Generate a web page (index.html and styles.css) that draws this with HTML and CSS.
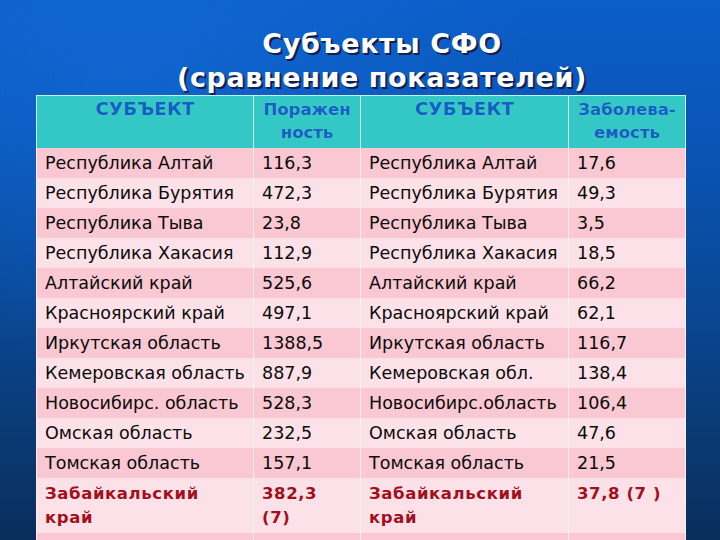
FILE: index.html
```html
<!DOCTYPE html>
<html lang="ru">
<head>
<meta charset="utf-8">
<link rel="stylesheet" href="styles.css">
</head>
<body>
<div class="slide">
  <h1 class="title">Субъекты СФО<br>(сравнение показателей)</h1>
  <table class="grid">
    <colgroup>
      <col class="c1"><col class="c2"><col class="c3"><col class="c4">
    </colgroup>
    <thead>
      <tr>
        <th class="hbig">СУБЪЕКТ</th>
        <th class="hsmall">Поражен<br>ность</th>
        <th class="hbig">СУБЪЕКТ</th>
        <th class="hsmall">Заболева-<br>емость</th>
      </tr>
    </thead>
    <tbody>
      <tr class="dk"><td>Республика Алтай</td><td>116,3</td><td>Республика Алтай</td><td>17,6</td></tr>
      <tr class="lt"><td>Республика Бурятия</td><td>472,3</td><td>Республика Бурятия</td><td>49,3</td></tr>
      <tr class="dk"><td>Республика Тыва</td><td>23,8</td><td>Республика Тыва</td><td>3,5</td></tr>
      <tr class="lt"><td>Республика Хакасия</td><td>112,9</td><td>Республика Хакасия</td><td>18,5</td></tr>
      <tr class="dk"><td>Алтайский край</td><td>525,6</td><td>Алтайский край</td><td>66,2</td></tr>
      <tr class="lt"><td>Красноярский край</td><td>497,1</td><td>Красноярский край</td><td>62,1</td></tr>
      <tr class="dk"><td>Иркутская область</td><td>1388,5</td><td>Иркутская область</td><td>116,7</td></tr>
      <tr class="lt"><td>Кемеровская область</td><td>887,9</td><td>Кемеровская обл.</td><td>138,4</td></tr>
      <tr class="dk"><td>Новосибирс. область</td><td>528,3</td><td>Новосибирс.область</td><td>106,4</td></tr>
      <tr class="lt"><td>Омская область</td><td>232,5</td><td>Омская область</td><td>47,6</td></tr>
      <tr class="dk"><td>Томская область</td><td>157,1</td><td>Томская область</td><td>21,5</td></tr>
      <tr class="lt hl"><td>Забайкальский<br>край</td><td>382,3<br>(7)</td><td>Забайкальский<br>край</td><td>37,8 (7 )</td></tr>
      <tr class="dk"><td>СФО</td><td>529,4</td><td>СФО</td><td>70,4</td></tr>
    </tbody>
  </table>
</div>
</body>
</html>
```
FILE: styles.css
```css
html, body {
  margin: 0;
  padding: 0;
}
body {
  width: 720px;
  height: 540px;
  overflow: hidden;
  background:
    radial-gradient(ellipse 420px 300px at 120px 60px, rgba(20,110,220,0.55), rgba(20,110,220,0) 100%),
    linear-gradient(180deg, #0b5ec8 0%, #0a55b8 25%, #0a4896 55%, #0a3a74 80%, #0a2e5c 100%);
  font-family: "DejaVu Sans", Verdana, sans-serif;
}
.slide {
  display: flex;
  flex-direction: column;
  align-items: flex-start;
  padding-top: 27px;
}
.title {
  margin: 0;
  align-self: stretch;
  padding-left: 44px;
  text-align: center;
  font-family: "DejaVu Sans", Verdana, sans-serif;
  font-weight: bold;
  font-size: 27px;
  line-height: 34px;
  letter-spacing: 0.6px;
  color: #ffffff;
  text-shadow: 2px 2px 0 #14204a, 1px 1px 1px #14204a;
}
.grid {
  margin-left: 36px;
  border-collapse: collapse;
  table-layout: fixed;
  width: 649px;
  color: #0b0b0b;
  font-size: 17.5px;
}
.c1 { width: 217px; }
.c2 { width: 107px; }
.c3 { width: 208px; }
.c4 { width: 117px; }
.grid th {
  background: #33c8c6;
  box-sizing: border-box;
  height: 52px;
  padding: 0;
  vertical-align: top;
  text-align: center;
  color: #1360c2;
  font-weight: bold;
  border: 1px solid #c8f0ee;
  border-bottom: none;
  text-shadow: 0 0 1px rgba(255,255,255,0.35);
}
.grid th.hbig {
  font-size: 18px;
  line-height: 20px;
  padding-top: 3px;
  letter-spacing: 0.3px;
}
.grid th.hsmall {
  font-size: 16.5px;
  line-height: 23px;
  padding-top: 2px;
}
.grid td {
  box-sizing: border-box;
  height: 30px;
  padding: 0 0 0 8px;
  white-space: nowrap;
  vertical-align: middle;
  line-height: 22px;
  border-right: 1px solid #fbeff2;
  border-left: 1px solid #fbeff2;
}
.grid tr.dk td { background: #f9c8d2; }
.grid tr.lt td { background: #fce2e8; }
.grid tr.hl td {
  height: 55px;
  vertical-align: top;
  padding-top: 4px;
  line-height: 24px;
  color: #a3101c;
  font-weight: bold;
  font-size: 16.5px;
  letter-spacing: 0.6px;
}
```
